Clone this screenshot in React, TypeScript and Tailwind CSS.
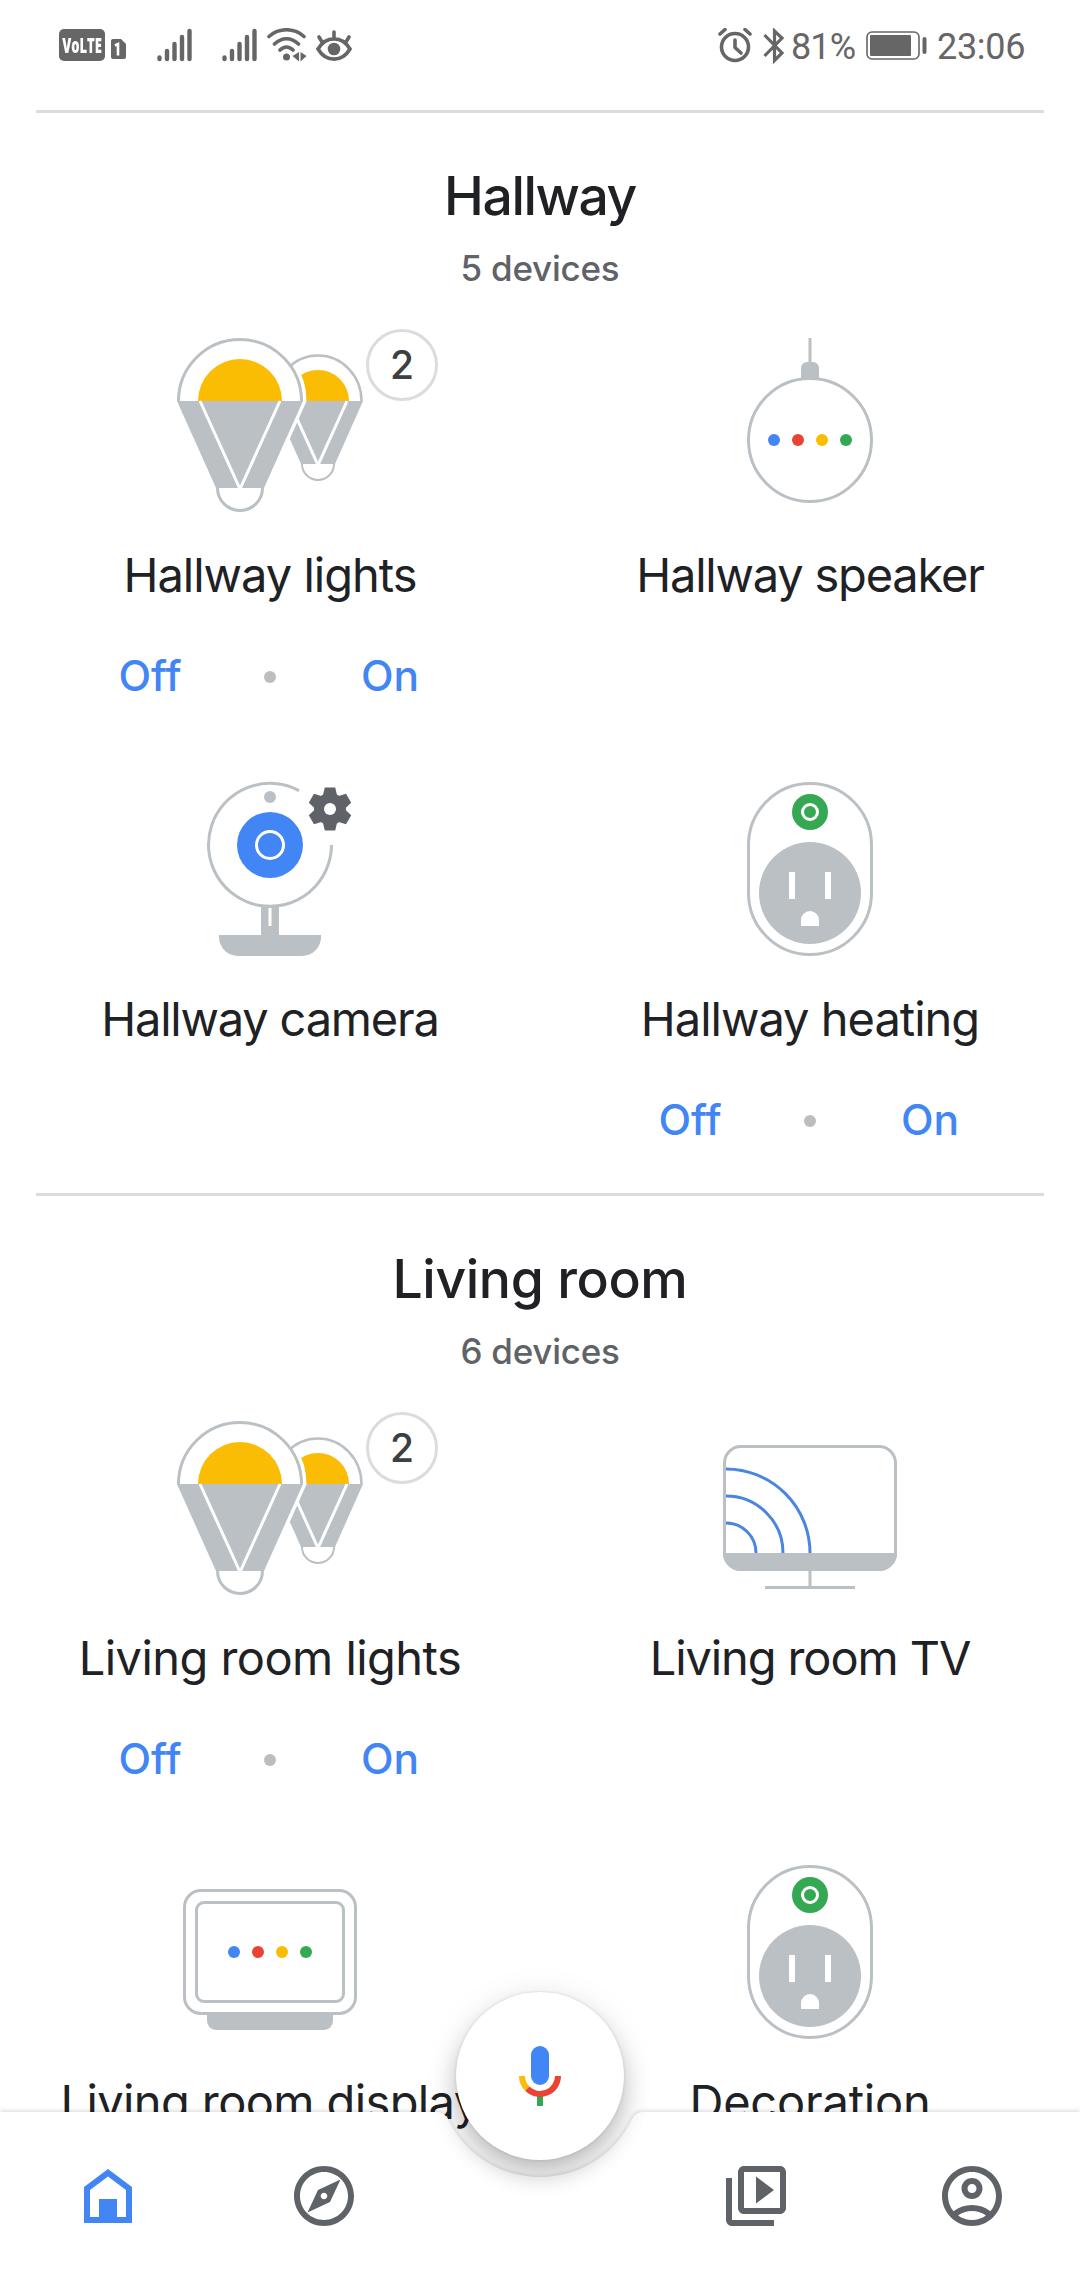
import type { ReactNode } from 'react';
import {
  MdOutlineAccountCircle,
  MdOutlineExplore,
  MdOutlineVideoLibrary,
} from 'react-icons/md';

type Device = {
  name: string;
  icon: ReactNode;
  tracking: string;
  count?: number;
  switchable?: boolean;
};

type Room = {
  name: string;
  tracking: string;
  devices: Device[];
  total: number;
};

const DeviceIcon = ({ children }: { children: ReactNode }) => (
  <svg viewBox="0 0 192 192" className="w-48 h-48 overflow-visible" fill="none">
    {children}
  </svg>
);

const AssistantDots = ({ y }: { y: number }) => (
  <>
    <circle cx="60" cy={y} r="6" fill="#4285f4" />
    <circle cx="84" cy={y} r="6" fill="#ea4335" />
    <circle cx="108" cy={y} r="6" fill="#fbbc04" />
    <circle cx="132" cy={y} r="6" fill="#34a853" />
  </>
);

const LightsIcon = () => (
  <DeviceIcon>
    {/* back bulb */}
    <path d="M113 72a31 31 0 0 1 62 0z" fill="#fbbc04" />
    <path d="M99 72h90l-28 63h-34z" fill="#bbc0c4" />
    <path d="M115 72l29 64 29-64" stroke="#fff" strokeWidth="3" />
    <path d="M128 135a16 16 0 0 0 32 0" stroke="#bbc0c4" strokeWidth="2" />
    {/* white gap between the two bulbs */}
    <path d="M119 34A65 65 0 0 1 131 72l-39 88H40L0 72" stroke="#fff" strokeWidth="3" fill="#fff" />
    <path d="M100.500 72a43.500 45.500 0 0 1 87 0" stroke="#bbc0c4" strokeWidth="2.500" />
    {/* front bulb */}
    <path d="M4.500 72a61.500 61.500 0 0 1 123 0" stroke="#bbc0c4" strokeWidth="3" fill="#fff" />
    <path d="M24 72a42 42 0 0 1 84 0z" fill="#fbbc04" />
    <path d="M3 72h126l-39 87H42z" fill="#bbc0c4" />
    <path d="M26 72l40 88 40-88" stroke="#fff" strokeWidth="3" />
    <path d="M43.500 159a22.500 22.500 0 0 0 45 0" stroke="#bbc0c4" strokeWidth="3" fill="#fff" />
  </DeviceIcon>
);

const SpeakerIcon = () => (
  <DeviceIcon>
    <path d="M96 9v26" stroke="#bbc0c4" strokeWidth="3" />
    <path d="M87 51V39a6 6 0 0 1 6-6h6a6 6 0 0 1 6 6v12z" fill="#bbc0c4" />
    <circle cx="96" cy="111" r="61.500" stroke="#bbc0c4" strokeWidth="3" />
    <AssistantDots y={111} />
  </DeviceIcon>
);

const CameraIcon = () => (
  <DeviceIcon>
    <path d="M125 17.600A61.500 61.500 0 1 0 157.500 72" stroke="#bbc0c4" strokeWidth="3" />
    <circle cx="96" cy="24" r="6" fill="#bbc0c4" />
    <circle cx="96" cy="72" r="33" fill="#4285f4" />
    <circle cx="96" cy="72" r="13.500" stroke="#fff" strokeWidth="3" />
    <path d="M87 134h18v28h42v2a19 19 0 0 1-19 19H64a19 19 0 0 1-19-19v-2h42z" fill="#bbc0c4" />
    <path d="M96 135v18" stroke="#fff" strokeWidth="3" />
    <g transform="translate(156 36)" fill="#5f6368">
      <circle r="11.500" stroke="#5f6368" strokeWidth="9" />
      {[0, 60, 120, 180, 240, 300].map((angle) => (
        <path key={angle} d="M-7-14L-5.200-21.500H5.200L7-14z" transform={`rotate(${angle})`} />
      ))}
      <circle r="6" fill="#fff" />
    </g>
  </DeviceIcon>
);

const OutletIcon = () => (
  <DeviceIcon>
    <rect x="34.500" y="10.500" width="123" height="171" rx="61.500" stroke="#bbc0c4" strokeWidth="3" />
    <circle cx="96" cy="39" r="18" fill="#34a853" />
    <circle cx="96" cy="39" r="7.500" stroke="#fff" strokeWidth="3" />
    <circle cx="96" cy="120" r="51" fill="#bbc0c4" />
    <path d="M75 99h6v27h-6zM111 99h6v27h-6zM87 153v-6a9 9 0 0 1 18 0v6z" fill="#fff" />
  </DeviceIcon>
);

const TvIcon = () => (
  <DeviceIcon>
    <rect x="10.500" y="34.500" width="171" height="123" rx="16.500" stroke="#bbc0c4" strokeWidth="3" />
    <path d="M9 141h174a18 18 0 0 1-18 18H27a18 18 0 0 1-18-18z" fill="#bbc0c4" />
    <path d="M96 159v16" stroke="#bbc0c4" strokeWidth="3" />
    <path d="M51 175.500h90" stroke="#bbc0c4" strokeWidth="3" />
    <g stroke="#4a86e0" strokeWidth="3">
      <path d="M12 111a30 30 0 0 1 30 30" />
      <path d="M12 84a57 57 0 0 1 57 57" />
      <path d="M12 57a84 84 0 0 1 84 84" />
    </g>
  </DeviceIcon>
);

const DisplayIcon = () => (
  <DeviceIcon>
    <rect x="10.500" y="34.500" width="171" height="123" rx="16.500" stroke="#bbc0c4" strokeWidth="3" />
    <rect x="22.500" y="46.500" width="147" height="99" rx="7.500" stroke="#bbc0c4" strokeWidth="3" />
    <path d="M33 158h126v7a9 9 0 0 1-9 9H42a9 9 0 0 1-9-9z" fill="#bbc0c4" />
    <AssistantDots y={96} />
  </DeviceIcon>
);

const rooms: Room[] = [
  {
    name: 'Hallway',
    tracking: 'tracking-[-1.4px]',
    total: 5,
    devices: [
      { name: 'Hallway lights', icon: <LightsIcon />, tracking: 'tracking-[-1px]', count: 2, switchable: true },
      { name: 'Hallway speaker', icon: <SpeakerIcon />, tracking: 'tracking-[-1.2px]' },
      { name: 'Hallway camera', icon: <CameraIcon />, tracking: 'tracking-[-1.2px]' },
      { name: 'Hallway heating', icon: <OutletIcon />, tracking: 'tracking-[-1px]', switchable: true },
    ],
  },
  {
    name: 'Living room',
    tracking: 'tracking-[-0.4px]',
    total: 6,
    devices: [
      { name: 'Living room lights', icon: <LightsIcon />, tracking: 'tracking-[-0.55px]', count: 2, switchable: true },
      { name: 'Living room TV', icon: <TvIcon />, tracking: 'tracking-[-1.1px]' },
      { name: 'Living room display', icon: <DisplayIcon />, tracking: 'tracking-[-0.6px]' },
      { name: 'Decoration', icon: <OutletIcon />, tracking: 'tracking-[-0.2px]' },
    ],
  },
];

const SignalBars = () => (
  <svg viewBox="0 0 36 34" className="w-9 h-[34px]" stroke="#666" strokeWidth="4.400" strokeLinecap="round">
    <path d="M2.500 29.500v1.500M10 23v8M17.500 16v15M25 9v22M32.500 3v28" />
  </svg>
);

const StatusBar = () => (
  <div className="flex h-[110px] items-start pl-[59px] pr-[54px] pt-7 text-[#666]">
    <div className="mt-[1px] flex h-8 w-[46px] items-center justify-center rounded-[5px] bg-[#666]">
      <span className="scale-x-[0.62] font-['Open_Sans'] text-[21px] font-extrabold leading-none text-white">
        VoLTE
      </span>
    </div>
    <svg viewBox="0 0 15 20" className="ml-[6px] mt-[11px] h-5 w-[15px]">
      <path d="M2 0h8l5 5v13a2 2 0 0 1-2 2H2a2 2 0 0 1-2-2V2a2 2 0 0 1 2-2z" fill="#666" />
      <path d="M4 6.500L7 5v11.500" stroke="#fff" strokeWidth="2.600" fill="none" />
    </svg>
    <div className="ml-[31px] flex">
      <SignalBars />
      <div className="ml-[29px]">
        <SignalBars />
      </div>
    </div>
    <svg viewBox="0 0 40 34" className="ml-[9px] h-[34px] w-10" fill="none" stroke="#666" strokeWidth="3.600" strokeLinecap="round">
      <path d="M2 8.500C12-.5 27-.5 37 8.500M7.500 16C15 9 24 9 31.500 16M13 22c4-4 9-4 13 0" />
      <circle cx="19.500" cy="29" r="3.500" fill="#666" stroke="none" />
      <path d="M32 24v9.500L25.500 28zM33.500 24v9.500l6-5.500z" fill="#666" stroke="none" />
    </svg>
    <svg viewBox="0 0 36 34" className="ml-[9px] h-[34px] w-9" fill="none" stroke="#666" strokeWidth="3.600" strokeLinecap="round">
      <path d="M2 21C10 7.500 26 7.500 34 21 26 34.500 10 34.500 2 21zM18 4v6M3 9l3 5M33 9l-3 5" />
      <circle cx="18" cy="21" r="6.300" fill="#666" stroke="none" />
    </svg>

    <svg viewBox="0 0 34 36" className="ml-auto h-9 w-[34px]" fill="none" stroke="#666" strokeWidth="3.600">
      <circle cx="17" cy="19" r="13.500" />
      <path d="M17 12v7.500l6 5.500" strokeLinecap="round" strokeLinejoin="round" />
      <path d="M2 6l5-4.500M32 6l-5-4.500" strokeLinecap="round" />
    </svg>
    <svg viewBox="0 0 22 36" className="ml-[11px] h-9 w-[22px]" fill="none" stroke="#666" strokeWidth="3.200">
      <path d="M1.500 7L19 25l-7.500 7.500V3L19 10 1.500 28" />
    </svg>
    <span className="ml-[6px] w-[67px] whitespace-nowrap font-[Roboto] text-[36px] leading-[38px] tracking-[-0.9px]">
      81%
    </span>
    <svg viewBox="0 0 62 30" className="ml-[8px] mt-[3px] h-[30px] w-[62px]" fill="none">
      <rect x="1" y="1" width="52" height="27" rx="5" stroke="#666" strokeWidth="1.600" />
      <rect x="4" y="4" width="41" height="21" rx="1" fill="#666" />
      <rect x="56.500" y="6" width="4" height="17" rx="2" fill="#666" />
    </svg>
    <span className="ml-[9px] w-[89px] whitespace-nowrap font-[Roboto] text-[36px] leading-[38px] tracking-[-0.3px]">
      23:06
    </span>
  </div>
);

const DeviceCard = ({ device }: { device: Device }) => (
  <div className="flex flex-col items-center">
    <div className="relative">
      {device.icon}
      {device.count && (
        <span className="absolute left-[192px] top-0 flex h-[72px] w-[72px] items-center justify-center rounded-full border-3 border-[#dadce0] bg-white text-[39px] font-medium text-[#3c4043]">
          {device.count}
        </span>
      )}
    </div>
    <h3 className={`mt-6 whitespace-nowrap text-[47px] leading-[60px] ${device.tracking}`}>
      {device.name}
    </h3>
    {device.switchable && (
      <div className="mt-[47px] flex h-12 items-center text-[42.5px] font-medium leading-[48px] text-[#4285f4]">
        <button className="w-[114px]">Off</button>
        <span className="mx-[57px] mt-[1px] h-3 w-3 rounded-full bg-[#bdbdbd]" />
        <button className="w-[114px]">On</button>
      </div>
    )}
  </div>
);

const RoomSection = ({ room }: { room: Room }) => (
  <section className="mx-9 h-[1083px] border-t-3 border-[#dadce0] pt-[51px] text-center">
    <h2 className={`text-[53.5px] font-medium leading-[64px] ${room.tracking}`}>{room.name}</h2>
    <p className="mt-4 text-[35px] font-medium leading-[48px] tracking-[-0.25px] text-[#5f6368]">
      {room.total} devices
    </p>
    <div className="-mx-9 mt-[37px] grid grid-cols-2 auto-rows-[444px]">
      {room.devices.map((device) => (
        <DeviceCard key={device.name} device={device} />
      ))}
    </div>
  </section>
);

const BottomNav = () => (
  <nav className="absolute inset-x-0 bottom-0 h-[168px]">
    {/* bar surface with the notch for the mic button */}
    <svg
      viewBox="0 0 1080 168"
      className="absolute inset-0 h-[168px] w-[1080px] overflow-visible drop-shadow-[0_-1px_2px_rgba(0,0,0,0.16)]"
    >
      <path
        d="M0 0H436C444 0 447 4 450 11A102 102 0 0 0 630 11C633 4 636 0 644 0H1080V168H0z"
        fill="#fff"
      />
    </svg>
    <button className="absolute left-1/2 top-[-120px] flex h-[168px] w-[168px] -translate-x-1/2 items-center justify-center rounded-full bg-white shadow-[0_0_3px_rgba(0,0,0,0.14),0_14px_24px_rgba(0,0,0,0.22),0_4px_36px_rgba(0,0,0,0.08)]">
      <svg viewBox="0 0 72 72" className="h-[72px] w-[72px]" fill="none">
        <rect x="27" y="6" width="18" height="39" rx="9" fill="#4285f4" />
        <path d="M36 56v10" stroke="#34a853" strokeWidth="6" />
        <path d="M18 36a18 18 0 0 0 5.300 12.700" stroke="#fbbc04" strokeWidth="6" />
        <path d="M23.300 48.700A18 18 0 0 0 54 36" stroke="#ea4335" strokeWidth="6" />
      </svg>
    </button>
    <div className="relative grid grid-cols-5 justify-items-center pt-12 text-[#5f6368]">
      <button className="text-[#4285f4]">
        <svg viewBox="0 0 24 24" className="h-[72px] w-[72px]" fill="currentColor">
          <path fillRule="evenodd" d="M4 9l8-6 8 6v12H4zM6 10v9h3v-6h6v6h3v-9l-6-4.500z" />
        </svg>
      </button>
      <button>
        <MdOutlineExplore className="h-[72px] w-[72px]" />
      </button>
      <span />
      <button>
        <MdOutlineVideoLibrary className="h-[72px] w-[72px]" />
      </button>
      <button>
        <MdOutlineAccountCircle className="h-[72px] w-[72px]" />
      </button>
    </div>
  </nav>
);

const App = () => {
  return (
    <div className="relative h-[2280px] w-[1080px] overflow-hidden bg-white font-[Inter,sans-serif] text-[#202124]">
      <StatusBar />
      {rooms.map((room) => (
        <RoomSection key={room.name} room={room} />
      ))}
      <BottomNav />
    </div>
  );
};

export default App;
